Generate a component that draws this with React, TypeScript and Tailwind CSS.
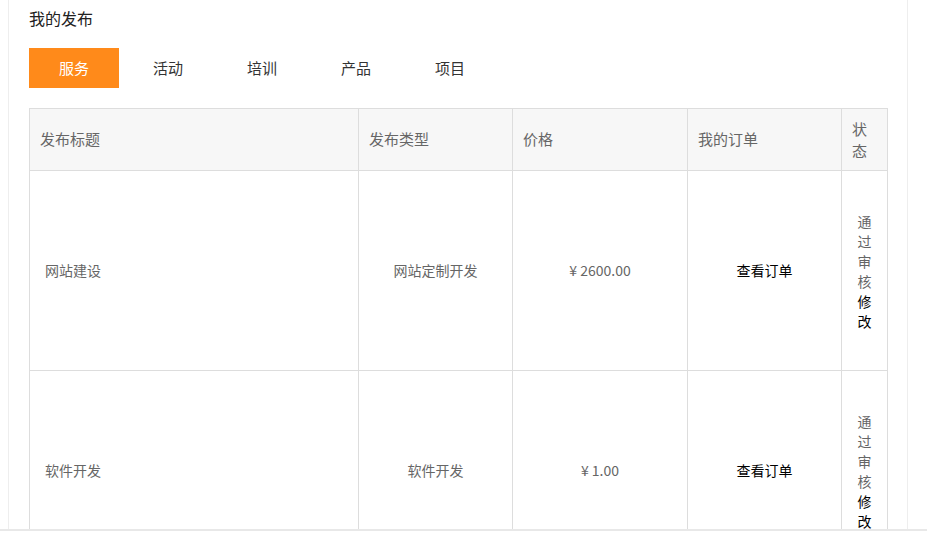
import { useState } from "react";

const tabs = ["服务", "活动", "培训", "产品", "项目"];

const rows = [
  { title: "网站建设", type: "网站定制开发", price: "¥ 2600.00" },
  { title: "软件开发", type: "软件开发", price: "¥ 1.00" },
];

export default function App() {
  const [active, setActive] = useState(0);

  return (
    <div
      className="w-[927px] h-[533px] bg-white overflow-hidden"
      style={{ fontFamily: '"Noto Sans CJK SC", "Liberation Sans", sans-serif' }}
    >
      <div className="h-[529px] overflow-hidden">
        <div className="ml-[8px] w-[900px] h-full border-l border-r border-[#eeeeee] pl-[20px]">
          <h2 className="pt-[7px] h-[48px] text-[16px] leading-[22px] text-[#222]">我的发布</h2>

          <div className="flex gap-[4px] h-[40px]">
            {tabs.map((t, i) => (
              <button
                key={t}
                onClick={() => setActive(i)}
                className={`w-[90px] h-[40px] text-[15px] ${
                  i === active ? "bg-[#ff8a1a] text-white" : "text-[#333]"
                }`}
              >
                {t}
              </button>
            ))}
          </div>

          <table className="mt-[20px] w-[858px] table-fixed border-collapse text-[#666]">
            <colgroup>
              <col className="w-[329px]" />
              <col className="w-[154px]" />
              <col className="w-[175px]" />
              <col className="w-[154px]" />
              <col className="w-[46px]" />
            </colgroup>
            <thead>
              <tr className="h-[62px] bg-[#f7f7f7] text-[15px]">
                <th className="border border-[#dddddd] px-[10px] text-left font-normal">发布标题</th>
                <th className="border border-[#dddddd] px-[10px] text-left font-normal">发布类型</th>
                <th className="border border-[#dddddd] px-[10px] text-left font-normal">价格</th>
                <th className="border border-[#dddddd] px-[10px] text-left font-normal">我的订单</th>
                <th className="border border-[#dddddd] px-[10px] text-left font-normal leading-[22px]">状态</th>
              </tr>
            </thead>
            <tbody className="text-[14px]">
              {rows.map((r) => (
                <tr key={r.title} className="h-[200px]">
                  <td className="border border-[#dddddd] pl-[15px]">{r.title}</td>
                  <td className="border border-[#dddddd] text-center">{r.type}</td>
                  <td className="border border-[#dddddd] text-center">{r.price}</td>
                  <td className="border border-[#dddddd] text-center text-black">查看订单</td>
                  <td className="border border-[#dddddd] px-[15px] text-center leading-[20px]">
                    <div>通过审核</div>
                    <div className="text-black">修改</div>
                  </td>
                </tr>
              ))}
            </tbody>
          </table>
        </div>
      </div>
      <div className="h-[2px] bg-[#e8e8e8]" />
    </div>
  );
}
